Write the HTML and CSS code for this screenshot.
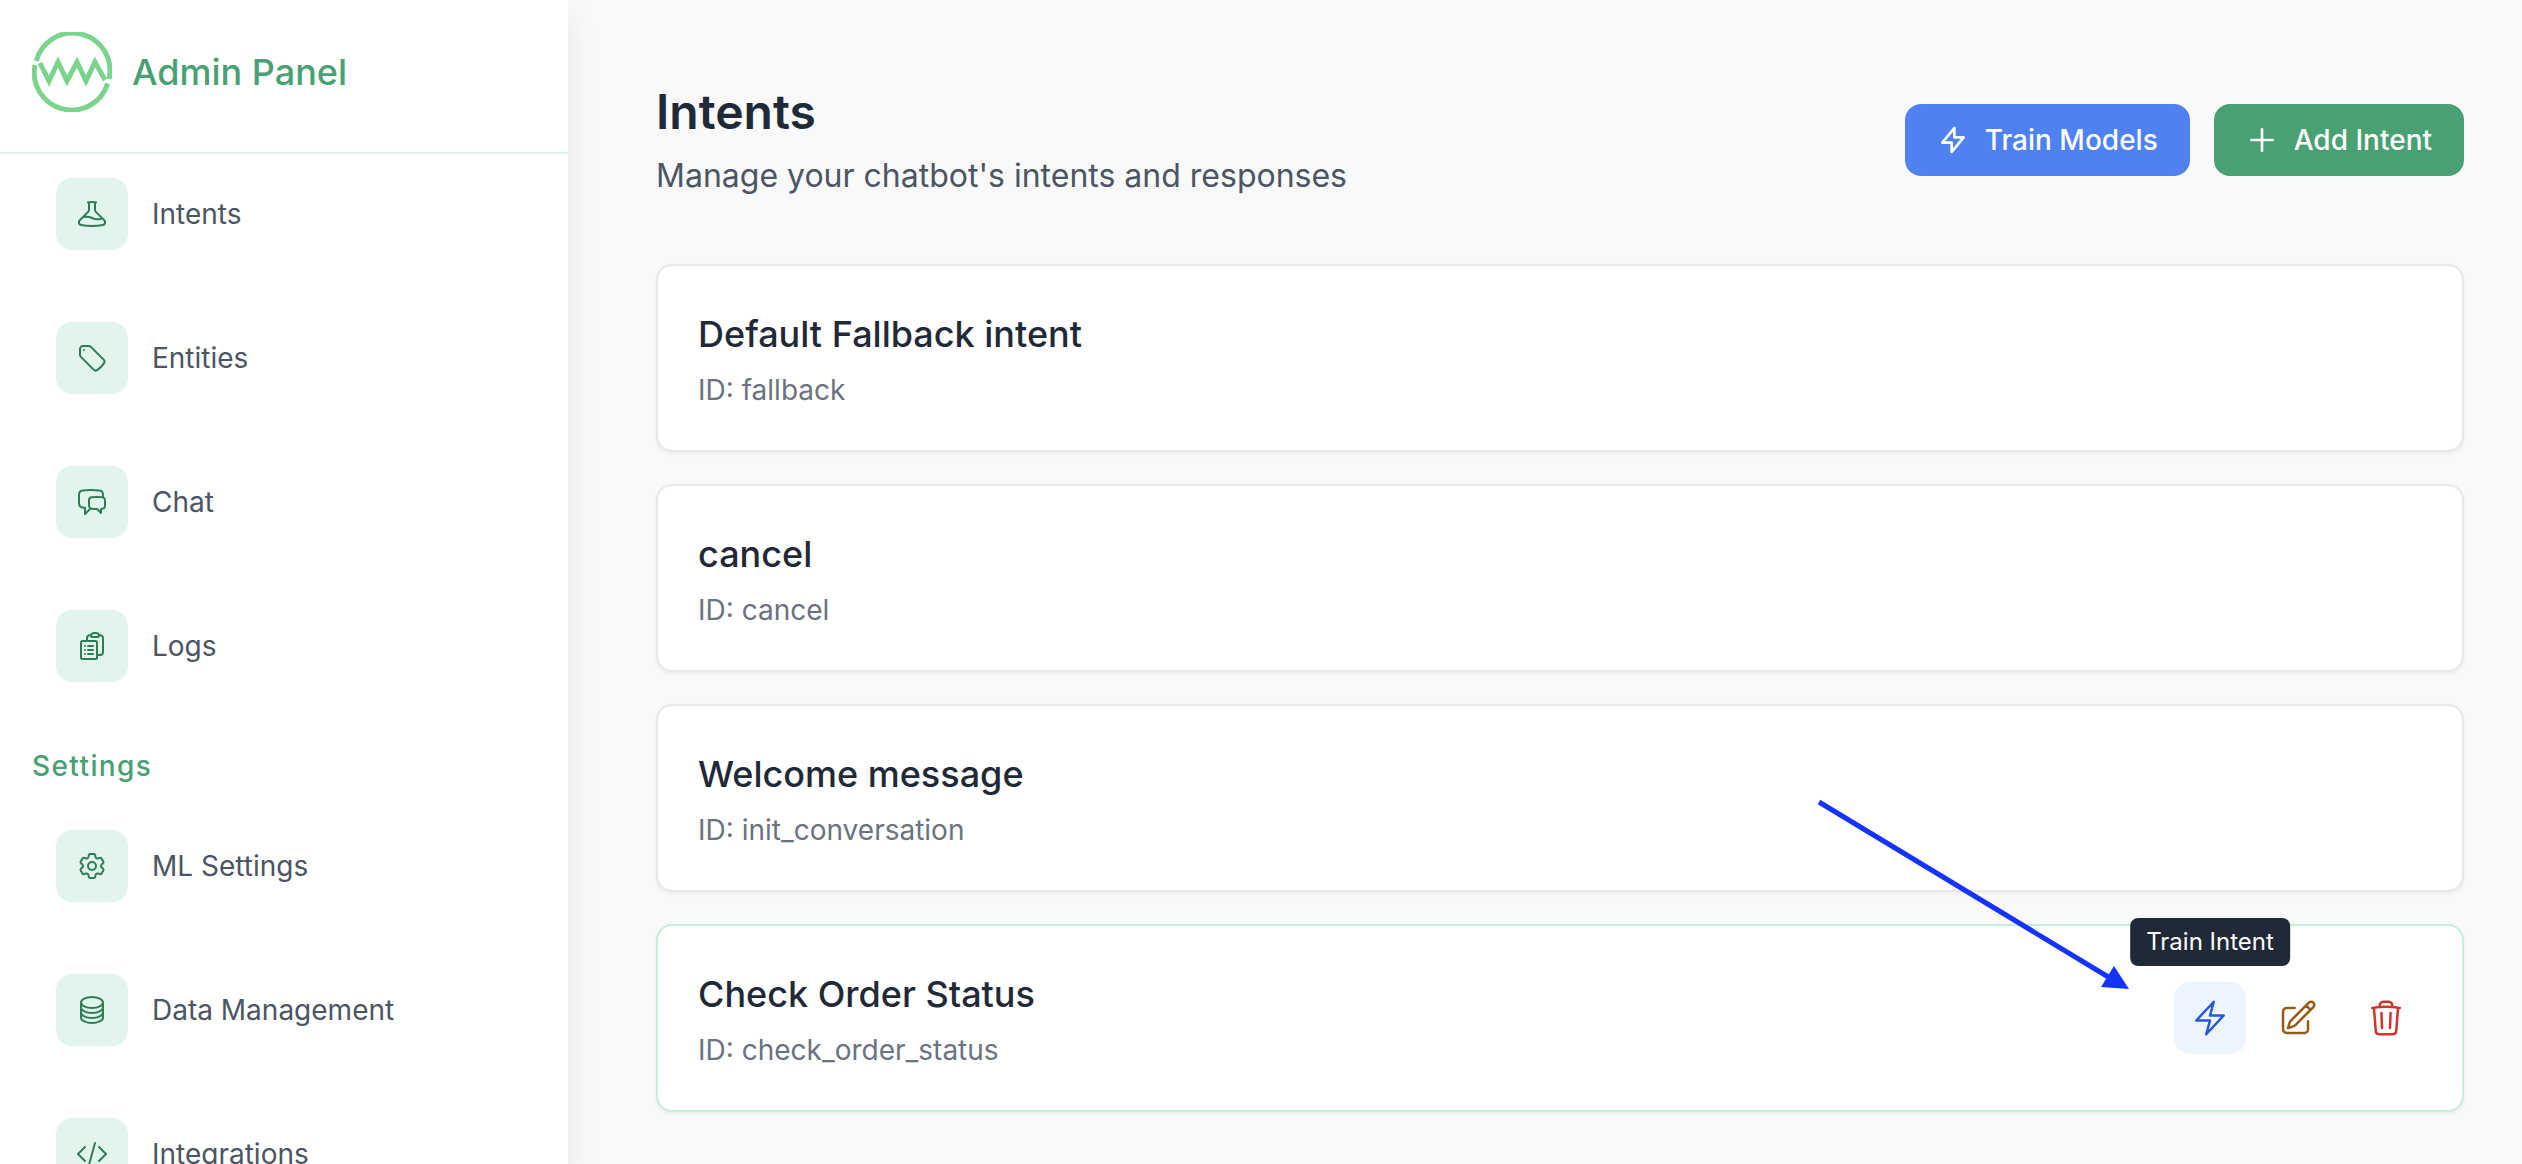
FILE: index.html
```html
<!DOCTYPE html>
<html lang="en">
<head>
    <meta charset="UTF-8">
    <meta name="viewport" content="width=device-width, initial-scale=1.0">
    <title>Admin Panel - Intents</title>
    <link rel="stylesheet" href="styles.css">
</head>
<body>

<aside class="sidebar">
    <div class="brand">
        <svg class="brand-logo" viewBox="0 0 80 80" aria-hidden="true">
            <path d="M4.2 29A37.5 37.5 0 0 1 77 47"/>
            <path d="M3 33A37.5 37.5 0 0 0 75.6 51.5"/>
            <path class="wave" d="M8 31L17 49L26 30L35 49L45 30L54 49L63 30L73 48"/>
        </svg>
        <span class="brand-name">Admin Panel</span>
    </div>

    <nav class="menu">
        <a class="menu-item" href="#intents">
            <span class="menu-icon">
                <svg class="icon" viewBox="0 0 24 24"><path d="M9.75 3.104v5.714a2.25 2.25 0 01-.659 1.591L5 14.5M9.75 3.104c-.251.023-.501.05-.75.082m.75-.082a24.301 24.301 0 014.5 0m0 0v5.714c0 .597.237 1.17.659 1.591L19.8 15.3M14.25 3.104c.251.023.501.05.75.082M19.8 15.3l-1.57.393A9.065 9.065 0 0112 15a9.065 9.065 0 00-6.23-.693L5 14.5m14.8.8l1.402 1.402c1.232 1.232.65 3.318-1.067 3.611A48.309 48.309 0 0112 21c-2.773 0-5.491-.235-8.135-.687-1.718-.293-2.3-2.379-1.067-3.61L5 14.5"/></svg>
            </span>
            Intents
        </a>
        <a class="menu-item" href="#entities">
            <span class="menu-icon">
                <svg class="icon" viewBox="0 0 24 24"><path d="M9.568 3H5.25A2.25 2.25 0 003 5.25v4.318c0 .597.237 1.17.659 1.591l9.581 9.581c.699.699 1.78.872 2.607.33a18.095 18.095 0 005.223-5.223c.542-.827.369-1.908-.33-2.607L11.16 3.66A2.25 2.25 0 009.568 3z"/><path d="M6 6h.008v.008H6V6z"/></svg>
            </span>
            Entities
        </a>
        <a class="menu-item" href="#chat">
            <span class="menu-icon">
                <svg class="icon" viewBox="0 0 24 24"><path d="M20.25 8.511c.884.284 1.5 1.128 1.5 2.097v4.286c0 1.136-.847 2.1-1.98 2.193-.34.027-.68.052-1.02.072v3.091l-3-3c-1.354 0-2.694-.055-4.02-.163a2.115 2.115 0 01-.825-.242m9.345-8.334a2.126 2.126 0 00-.476-.095 48.64 48.64 0 00-8.048 0c-1.131.094-1.976 1.057-1.976 2.192v4.286c0 .837.46 1.58 1.155 1.951m9.345-8.334V6.637c0-1.621-1.152-3.026-2.76-3.235A48.455 48.455 0 0011.25 3c-2.115 0-4.198.137-6.24.402-1.608.209-2.76 1.614-2.76 3.235v6.226c0 1.621 1.152 3.026 2.76 3.235.577.075 1.157.14 1.74.194V21l4.155-4.155"/></svg>
            </span>
            Chat
        </a>
        <a class="menu-item" href="#logs">
            <span class="menu-icon">
                <svg class="icon" viewBox="0 0 24 24"><path d="M9 12h3.75M9 15h3.75M9 18h3.75m3 .75H18a2.25 2.25 0 002.25-2.25V6.108c0-1.135-.845-2.098-1.976-2.192a48.424 48.424 0 00-1.123-.08m-5.801 0c-.065.21-.1.433-.1.664 0 .414.336.75.75.75h4.5a.75.75 0 00.75-.75 2.25 2.25 0 00-.1-.664m-5.8 0A2.251 2.251 0 0113.5 2.25H15c1.012 0 1.867.668 2.15 1.586m-5.8 0c-.376.023-.75.05-1.124.08C9.095 4.01 8.25 4.973 8.25 6.108V8.25m0 0H4.875c-.621 0-1.125.504-1.125 1.125v11.25c0 .621.504 1.125 1.125 1.125h9.75c.621 0 1.125-.504 1.125-1.125V9.375c0-.621-.504-1.125-1.125-1.125H8.25zM6.75 12h.008v.008H6.75V12zm0 3h.008v.008H6.75V15zm0 3h.008v.008H6.75V18z"/></svg>
            </span>
            Logs
        </a>
    </nav>

    <h2 class="menu-title">Settings</h2>
    <nav class="menu">
        <a class="menu-item" href="#ml-settings">
            <span class="menu-icon">
                <svg class="icon" viewBox="0 0 24 24"><path d="M9.594 3.94c.09-.542.56-.94 1.11-.94h2.593c.55 0 1.02.398 1.11.94l.213 1.281c.063.374.313.686.645.87.074.04.147.083.22.127.324.196.72.257 1.075.124l1.217-.456a1.125 1.125 0 011.37.49l1.296 2.247a1.125 1.125 0 01-.26 1.431l-1.003.827c-.293.24-.438.613-.431.992a6.759 6.759 0 010 .255c-.007.378.138.75.43.99l1.005.828c.424.35.534.954.26 1.43l-1.298 2.247a1.125 1.125 0 01-1.369.491l-1.217-.456c-.355-.133-.75-.072-1.076.124a6.57 6.57 0 01-.22.128c-.331.183-.581.495-.644.869l-.213 1.28c-.09.543-.56.941-1.11.941h-2.594c-.55 0-1.02-.398-1.11-.94l-.213-1.281c-.062-.374-.312-.686-.644-.87a6.52 6.52 0 01-.22-.127c-.325-.196-.72-.257-1.076-.124l-1.217.456a1.125 1.125 0 01-1.369-.49l-1.297-2.247a1.125 1.125 0 01.26-1.431l1.004-.827c.292-.24.437-.613.43-.992a6.932 6.932 0 010-.255c.007-.378-.138-.75-.43-.99l-1.004-.828a1.125 1.125 0 01-.26-1.43l1.297-2.247a1.125 1.125 0 011.37-.491l1.216.456c.356.133.751.072 1.076-.124.072-.044.146-.087.22-.128.332-.183.582-.495.644-.869l.214-1.281z"/><path d="M15 12a3 3 0 11-6 0 3 3 0 016 0z"/></svg>
            </span>
            ML Settings
        </a>
        <a class="menu-item" href="#data">
            <span class="menu-icon">
                <svg class="icon" viewBox="0 0 24 24"><path d="M20.25 6.375c0 2.278-3.694 4.125-8.25 4.125S3.75 8.653 3.75 6.375m16.5 0c0-2.278-3.694-4.125-8.25-4.125S3.75 4.097 3.75 6.375m16.5 0v11.25c0 2.278-3.694 4.125-8.25 4.125s-8.25-1.847-8.25-4.125V6.375m16.5 0v3.75m-16.5-3.75v3.75m16.5 0v3.75C20.25 16.153 16.556 18 12 18s-8.25-1.847-8.25-4.125v-3.75m16.5 0c0 2.278-3.694 4.125-8.25 4.125s-8.25-1.847-8.25-4.125"/></svg>
            </span>
            Data Management
        </a>
        <a class="menu-item" href="#integrations">
            <span class="menu-icon">
                <svg class="icon" viewBox="0 0 24 24"><path d="M17.25 6.75L22.5 12l-5.25 5.25m-10.5 0L1.5 12l5.25-5.25m7.5-3l-4.5 16.5"/></svg>
            </span>
            Integrations
        </a>
    </nav>
</aside>

<main class="content">
    <div class="page-header">
        <div class="page-heading">
            <h1>Intents</h1>
            <p>Manage your chatbot's intents and responses</p>
        </div>
        <div class="page-buttons">
            <button type="button" class="btn btn-train">
                <svg class="icon" viewBox="0 0 24 24"><path d="M13 10V3L4 14h7v7l9-11h-7z"/></svg>
                Train Models
            </button>
            <button type="button" class="btn btn-add">
                <svg class="icon" viewBox="0 0 24 24"><path d="M12 4v16m8-8H4"/></svg>
                Add Intent
            </button>
        </div>
    </div>

    <div class="intent-list">
        <div class="intent-card">
            <div class="intent-info">
                <h3>Default Fallback intent</h3>
                <p>ID: fallback</p>
            </div>
        </div>
        <div class="intent-card">
            <div class="intent-info">
                <h3>cancel</h3>
                <p>ID: cancel</p>
            </div>
        </div>
        <div class="intent-card">
            <div class="intent-info">
                <h3>Welcome message</h3>
                <p>ID: init_conversation</p>
            </div>
        </div>
        <div class="intent-card active">
            <div class="intent-info">
                <h3>Check Order Status</h3>
                <p>ID: check_order_status</p>
            </div>
            <div class="intent-actions">
                <button type="button" class="action action-train" aria-label="Train Intent">
                    <svg class="icon" viewBox="0 0 24 24"><path d="M3.75 13.5l10.5-11.25L12 10.5h8.25L9.75 21.75 12 13.5H3.75z"/></svg>
                    <span class="tooltip">Train Intent</span>
                </button>
                <button type="button" class="action action-edit" aria-label="Edit Intent">
                    <svg class="icon" viewBox="0 0 24 24"><path d="M16.862 4.487l1.687-1.688a1.875 1.875 0 112.652 2.652L10.582 16.07a4.5 4.5 0 01-1.897 1.13L6 18l.8-2.685a4.5 4.5 0 011.13-1.897l8.932-8.931zm0 0L19.5 7.125M18 14v4.75A2.25 2.25 0 0115.75 21H5.25A2.25 2.25 0 013 18.75V8.25A2.25 2.25 0 015.25 6H10"/></svg>
                </button>
                <button type="button" class="action action-delete" aria-label="Delete Intent">
                    <svg class="icon" viewBox="0 0 24 24"><path d="M14.74 9l-.346 9m-4.788 0L9.26 9m9.968-3.21c.342.052.682.107 1.022.166m-1.022-.165L18.16 19.673a2.25 2.25 0 01-2.244 2.077H8.084a2.25 2.25 0 01-2.244-2.077L4.772 5.79m14.456 0a48.108 48.108 0 00-3.478-.397m-12 .562c.34-.059.68-.114 1.022-.165m0 0a48.11 48.11 0 013.478-.397m7.5 0v-.916c0-1.18-.91-2.164-2.09-2.201a51.964 51.964 0 00-3.32 0c-1.18.037-2.09 1.022-2.09 2.201v.916m7.5 0a48.667 48.667 0 00-7.5 0"/></svg>
                </button>
                <!-- arrow pointing at the train button -->
                <svg class="pointer" viewBox="0 0 320 200" aria-hidden="true">
                    <path class="pointer-line" d="M5 6L296 182"/>
                    <path class="pointer-head" d="M315 193L300 170L287 191Z"/>
                </svg>
            </div>
        </div>
    </div>
</main>

</body>
</html>
```
FILE: styles.css
```css
* {
    box-sizing: border-box;
}
body {
    font-family: Inter, "Liberation Sans", sans-serif;
    margin: 0;
    height: 100vh;
    display: flex;
    overflow: hidden;
    background-color: #f9f9f9;
    color: #1f2937;
}
h1, h2, h3, p {
    margin: 0;
}
button {
    font-family: inherit;
    border: none;
    cursor: pointer;
}
.icon {
    display: block;
    width: 32px;
    height: 32px;
    fill: none;
    stroke: currentColor;
    stroke-width: 1.5;
    stroke-linecap: round;
    stroke-linejoin: round;
}

/* Sidebar */
.sidebar {
    flex: none;
    width: 568px;
    background-color: white;
    box-shadow: 0 16px 32px rgba(0, 0, 0, 0.08);
    overflow: hidden;
}
.brand {
    display: flex;
    align-items: center;
    gap: 20px;
    padding: 32px 32px 40px;
    border-bottom: 2px solid #def2f0;
}
.brand-logo {
    width: 80px;
    height: 80px;
    fill: none;
    stroke: #7bd48c;
    stroke-width: 5;
}
.brand-name {
    font-size: 36px;
    font-weight: 500;
    color: #48a073;
}
.menu {
    display: flex;
    flex-direction: column;
    gap: 24px;
    padding: 0 32px;
}
.menu-item {
    display: flex;
    align-items: center;
    gap: 24px;
    padding: 24px;
    font-size: 28px;
    line-height: 40px;
    color: #4b5563;
    text-decoration: none;
}
.menu-icon {
    padding: 20px;
    border-radius: 16px;
    background-color: #e2f5ec;
    color: #2f7d56;
}
.menu-title {
    padding: 40px 32px 20px;
    font-size: 28px;
    line-height: 40px;
    font-weight: 500;
    letter-spacing: 0.05em;
    color: #48a073;
}

/* Page */
.content {
    flex: 1;
    padding: 80px 58px 52px 88px;
}
.page-header {
    display: flex;
    justify-content: space-between;
    align-items: center;
    margin-bottom: 64px;
}
.page-heading h1 {
    font-size: 48px;
    line-height: 64px;
    font-weight: 600;
}
.page-heading p {
    margin-top: 8px;
    font-size: 32px;
    line-height: 48px;
    color: #4b5563;
}
.page-buttons {
    display: flex;
    gap: 24px;
}
.btn {
    display: flex;
    align-items: center;
    gap: 16px;
    padding: 16px 32px;
    border-radius: 16px;
    font-size: 28px;
    line-height: 40px;
    font-weight: 500;
    color: white;
}
.btn .icon {
    stroke-width: 2;
}
.btn-train {
    background-color: #4f82f1;
}
.btn-add {
    background-color: #48a073;
}

/* Intent cards */
.intent-list {
    display: flex;
    flex-direction: column;
    gap: 32px;
}
.intent-card {
    display: flex;
    justify-content: space-between;
    align-items: center;
    padding: 40px;
    background-color: white;
    border: 2px solid #e5e7eb;
    border-radius: 16px;
    box-shadow: 0 2px 4px rgba(0, 0, 0, 0.05);
}
.intent-card.active {
    border-color: #c3efd9;
}
.intent-info h3 {
    font-size: 36px;
    line-height: 56px;
    font-weight: 500;
}
.intent-info p {
    margin-top: 8px;
    font-size: 28px;
    line-height: 40px;
    color: #6b7280;
}
.intent-actions {
    position: relative;
    display: flex;
    gap: 16px;
}
.action {
    position: relative;
    padding: 16px;
    border-radius: 16px;
    background-color: transparent;
}
.action .icon {
    width: 40px;
    height: 40px;
}
.action-train {
    background-color: #ecf4fe;
    color: #2858db;
}
.action-edit {
    color: #975a16;
}
.action-delete {
    color: #d0342c;
}
.tooltip {
    position: absolute;
    bottom: 100%;
    left: 50%;
    transform: translateX(-50%);
    margin-bottom: 16px;
    padding: 8px 16px;
    border-radius: 8px;
    background-color: #1f2937;
    color: white;
    font-size: 24px;
    line-height: 32px;
    white-space: nowrap;
}
.pointer {
    position: absolute;
    right: 288px;
    bottom: 58px;
    width: 320px;
    height: 200px;
}
.pointer-line {
    stroke: #1433ff;
    stroke-width: 5;
}
.pointer-head {
    fill: #1433ff;
}
```
